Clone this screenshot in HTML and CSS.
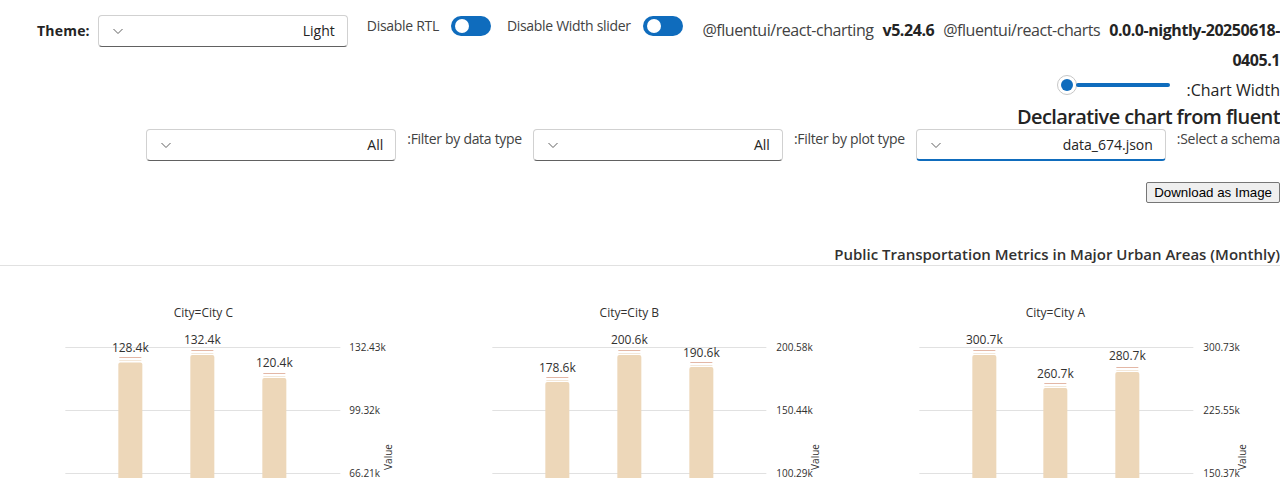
FILE: index.html
```html
<!DOCTYPE html>
<html lang="en">
<head>
<meta charset="utf-8">
<title>Declarative chart</title>
<link rel="stylesheet" href="styles.css">
</head>
<body>
<div class="page">
  <header class="top-row">
    <div class="theme-group">
      <span class="theme-label">Theme:</span>
      <div class="dropdown dd-theme">
        <svg class="chev" width="12" height="12" viewBox="0 0 12 12"><path d="M1.5 4 L6 8.5 L10.5 4" fill="none" stroke="#616161" stroke-width="1"/></svg>
        <span class="dd-value">Light</span>
      </div>
    </div>
    <div class="switch-group">
      <span class="switch-label">Disable RTL</span>
      <span class="switch"><span class="knob"></span></span>
    </div>
    <div class="switch-group">
      <span class="switch-label">Disable Width slider</span>
      <span class="switch"><span class="knob"></span></span>
    </div>
    <div class="versions">
      <span class="line1"><span>@fluentui/react-charting</span><b class="sp">v5.24.6</b><span class="sp">@fluentui/react-charts</span><b class="sp">0.0.0-nightly-20250618-</b></span><br><b>0405.1</b>
    </div>
  </header>

  <div class="slider-row">
    <div class="slider"><span class="thumb"><span class="thumb-dot"></span></span><span class="track"></span></div>
    <span class="slider-label">:Chart Width</span>
  </div>

  <h1 class="heading">Declarative chart from fluent</h1>

  <div class="filter-row">
    <div class="dropdown">
      <svg class="chev" width="12" height="12" viewBox="0 0 12 12"><path d="M1.5 4 L6 8.5 L10.5 4" fill="none" stroke="#616161" stroke-width="1"/></svg>
      <span class="dd-value">All</span>
    </div>
    <span class="filter-label">:Filter by data type</span>
    <div class="dropdown">
      <svg class="chev" width="12" height="12" viewBox="0 0 12 12"><path d="M1.5 4 L6 8.5 L10.5 4" fill="none" stroke="#616161" stroke-width="1"/></svg>
      <span class="dd-value">All</span>
    </div>
    <span class="filter-label">:Filter by plot type</span>
    <div class="dropdown dd-focus">
      <svg class="chev" width="12" height="12" viewBox="0 0 12 12"><path d="M1.5 4 L6 8.5 L10.5 4" fill="none" stroke="#616161" stroke-width="1"/></svg>
      <span class="dd-value">data_674.json</span>
    </div>
    <span class="filter-label">:Select a schema</span>
  </div>

  <div class="button-row">
    <button class="download-btn" type="button">Download as Image</button>
  </div>

  <div class="chart-title">Public Transportation Metrics in Major Urban Areas (Monthly)</div>

  <div class="panels">
    <svg class="panel" width="426" height="212" viewBox="0 0 426 212">
      <text class="sub-title" x="203" y="51" text-anchor="middle">City=City C</text>
      <line class="grid" x1="65" x2="340" y1="81.5" y2="81.5"/>
      <line class="grid" x1="65" x2="340" y1="144.5" y2="144.5"/>
      <line class="grid" x1="65" x2="340" y1="207.5" y2="207.5"/>
      <text class="tick" x="349" y="85">132.43k</text>
      <text class="tick" x="349" y="148">99.32k</text>
      <text class="tick" x="349" y="211">66.21k</text>
      <rect class="cap" x="119" y="91" width="22" height="1"/><rect class="cap2" x="119" y="94" width="22" height="1"/>
      <rect class="bar" x="118" y="96.5" width="24" height="130" rx="2"/>
      <text class="dlabel" x="130" y="86" text-anchor="middle">128.4k</text>
      <rect class="cap" x="191" y="84" width="22" height="1"/><rect class="cap2" x="191" y="87" width="22" height="1"/>
      <rect class="bar" x="190" y="89" width="24" height="130" rx="2"/>
      <text class="dlabel" x="202" y="78" text-anchor="middle">132.4k</text>
      <rect class="cap" x="263" y="107" width="22" height="1"/><rect class="cap2" x="263" y="110" width="22" height="1"/>
      <rect class="bar" x="262" y="112" width="24" height="130" rx="2"/>
      <text class="dlabel" x="274" y="101" text-anchor="middle">120.4k</text>
      <text class="tick" transform="translate(392 191) rotate(-90)" text-anchor="middle">Value</text>
    </svg>
    <svg class="panel" width="426" height="212" viewBox="0 0 426 212">
      <text class="sub-title" x="202" y="51" text-anchor="middle">City=City B</text>
      <line class="grid" x1="65" x2="339" y1="81.5" y2="81.5"/>
      <line class="grid" x1="65" x2="339" y1="144.5" y2="144.5"/>
      <line class="grid" x1="65" x2="339" y1="207.5" y2="207.5"/>
      <text class="tick" x="349" y="85">200.58k</text>
      <text class="tick" x="349" y="148">150.44k</text>
      <text class="tick" x="349" y="211">100.29k</text>
      <rect class="cap" x="119" y="111" width="22" height="1"/><rect class="cap2" x="119" y="114" width="22" height="1"/>
      <rect class="bar" x="118" y="116" width="24" height="130" rx="2"/>
      <text class="dlabel" x="130" y="105.5" text-anchor="middle">178.6k</text>
      <rect class="cap" x="191" y="84" width="22" height="1"/><rect class="cap2" x="191" y="87" width="22" height="1"/>
      <rect class="bar" x="190" y="89" width="24" height="130" rx="2"/>
      <text class="dlabel" x="202" y="78" text-anchor="middle">200.6k</text>
      <rect class="cap" x="263" y="96" width="22" height="1"/><rect class="cap2" x="263" y="99" width="22" height="1"/>
      <rect class="bar" x="262" y="101" width="24" height="130" rx="2"/>
      <text class="dlabel" x="274" y="90.5" text-anchor="middle">190.6k</text>
      <text class="tick" transform="translate(392 191) rotate(-90)" text-anchor="middle">Value</text>
    </svg>
    <svg class="panel" width="426" height="212" viewBox="0 0 426 212">
      <text class="sub-title" x="202" y="51" text-anchor="middle">City=City A</text>
      <line class="grid" x1="66" x2="340" y1="81.5" y2="81.5"/>
      <line class="grid" x1="66" x2="340" y1="144.5" y2="144.5"/>
      <line class="grid" x1="66" x2="340" y1="207.5" y2="207.5"/>
      <text class="tick" x="350" y="85">300.73k</text>
      <text class="tick" x="350" y="148">225.55k</text>
      <text class="tick" x="350" y="211">150.37k</text>
      <rect class="cap" x="120" y="84" width="22" height="1"/><rect class="cap2" x="120" y="87" width="22" height="1"/>
      <rect class="bar" x="119" y="89" width="24" height="130" rx="2"/>
      <text class="dlabel" x="131" y="78" text-anchor="middle">300.7k</text>
      <rect class="cap" x="191" y="117" width="22" height="1"/><rect class="cap2" x="191" y="120" width="22" height="1"/>
      <rect class="bar" x="190" y="122" width="24" height="130" rx="2"/>
      <text class="dlabel" x="202" y="112" text-anchor="middle">260.7k</text>
      <rect class="cap" x="263" y="101" width="22" height="1"/><rect class="cap2" x="263" y="104" width="22" height="1"/>
      <rect class="bar" x="262" y="106" width="24" height="130" rx="2"/>
      <text class="dlabel" x="274" y="94" text-anchor="middle">280.7k</text>
      <text class="tick" transform="translate(393 191) rotate(-90)" text-anchor="middle">Value</text>
    </svg>
  </div>
</div>
</body>
</html>
```

FILE: styles.css
```css
html, body {
  margin: 0;
  padding: 0;
  background: #ffffff;
}

body {
  font-family: "Segoe UI", "Open Sans", "Noto Sans", sans-serif;
  font-size: 14px;
  color: #242424;
  overflow: hidden;
}

.page {
  width: 1280px;
}

/* top row */
.top-row {
  display: flex;
  align-items: flex-start;
  padding: 15px 0 0 37px;
  height: 60px;
}

.theme-group {
  flex: none;
  display: flex;
  align-items: center;
  gap: 8px;
  margin-right: 19px;
}

.theme-label {
  font-weight: 700;
  line-height: 20px;
  letter-spacing: 0.2px;
  white-space: nowrap;
}

.dropdown {
  flex: none;
  display: flex;
  align-items: center;
  justify-content: space-between;
  box-sizing: border-box;
  width: 250px;
  height: 32px;
  padding: 0 12px 0 13px;
  border: 1px solid #d1d1d1;
  border-bottom-color: #616161;
  border-radius: 4px;
  background: #ffffff;
  color: #242424;
  line-height: 20px;
}

.dd-focus {
  border-bottom: 2px solid #0f6cbd;
}

.chev {
  display: block;
  flex: none;
}

.switch-group {
  flex: none;
  display: flex;
  align-items: flex-start;
  gap: 12px;
  margin-top: 1px;
  margin-right: 16px;
}

.switch-label {
  line-height: 20px;
  color: #424242;
  letter-spacing: -0.3px;
  white-space: nowrap;
}

.switch {
  flex: none;
  display: flex;
  align-items: center;
  box-sizing: border-box;
  width: 40px;
  height: 20px;
  padding: 0 4px;
  border-radius: 10px;
  background: #0f6cbd;
}

.knob {
  width: 14px;
  height: 14px;
  border-radius: 50%;
  background: #ffffff;
}

.versions {
  flex: 1;
  min-width: 0;
  text-align: right;
  font-size: 16px;
  line-height: 30px;
  letter-spacing: -0.45px;
  color: #424242;
}

.versions b {
  color: #242424;
  font-weight: 700;
}

.line1 {
  white-space: nowrap;
}

.sp {
  margin-left: 9px;
}

/* slider */
.slider-row {
  display: flex;
  justify-content: flex-end;
  align-items: flex-start;
  height: 30px;
}

.slider {
  display: flex;
  align-items: center;
  height: 20px;
}

.thumb {
  display: flex;
  align-items: center;
  justify-content: center;
  box-sizing: border-box;
  width: 20px;
  height: 20px;
  border-radius: 50%;
  border: 1px solid #c7c7c7;
  background: #ffffff;
}

.thumb-dot {
  width: 12px;
  height: 12px;
  border-radius: 50%;
  background: #0f6cbd;
}

.track {
  width: 94px;
  height: 4px;
  border-radius: 2px;
  background: #0f6cbd;
  margin-left: -1px;
}

.slider-label {
  margin-left: 17px;
  margin-top: 4px;
  font-size: 16px;
  line-height: 22px;
  letter-spacing: 0;
  color: #242424;
}

/* heading */
.heading {
  margin: 0;
  text-align: right;
  font-size: 20px;
  font-weight: 600;
  line-height: 24px;
  letter-spacing: -0.6px;
  color: #242424;
}

/* filters */
.filter-row {
  display: flex;
  justify-content: flex-end;
  align-items: flex-start;
  gap: 11px;
}

.filter-label {
  font-size: 14px;
  line-height: 20px;
  letter-spacing: -0.3px;
  color: #424242;
  white-space: nowrap;
}

/* button */
.button-row {
  display: flex;
  justify-content: flex-end;
  margin-top: 21px;
}

.download-btn {
  font-family: "Liberation Sans", Arial, sans-serif;
  font-size: 13.33px;
  height: 21px;
  padding: 1px 7px;
  border: 1px solid #767676;
  border-radius: 2px;
  background: #efefef;
  color: #000000;
}

/* chart */
.chart-title {
  margin-top: 41px;
  text-align: right;
  font-size: 15px;
  font-weight: 600;
  line-height: 21px;
  color: #323130;
  border-bottom: 1px solid #e1e1e1;
}

.panels {
  display: flex;
}

.panel {
  flex: 1;
  display: block;
  overflow: visible;
}

.panel .grid {
  stroke: #e1e1e1;
  stroke-width: 1;
}

.panel .tick {
  font-size: 10px;
  fill: #323130;
}

.panel .sub-title {
  font-size: 12px;
  fill: #323130;
}

.panel .dlabel {
  font-size: 12px;
  fill: #323130;
}

.panel .bar {
  fill: #edd7b9;
}

.panel .cap {
  fill: #e3b7a6;
}

.panel .cap2 {
  fill: #f4e8d9;
}
```
